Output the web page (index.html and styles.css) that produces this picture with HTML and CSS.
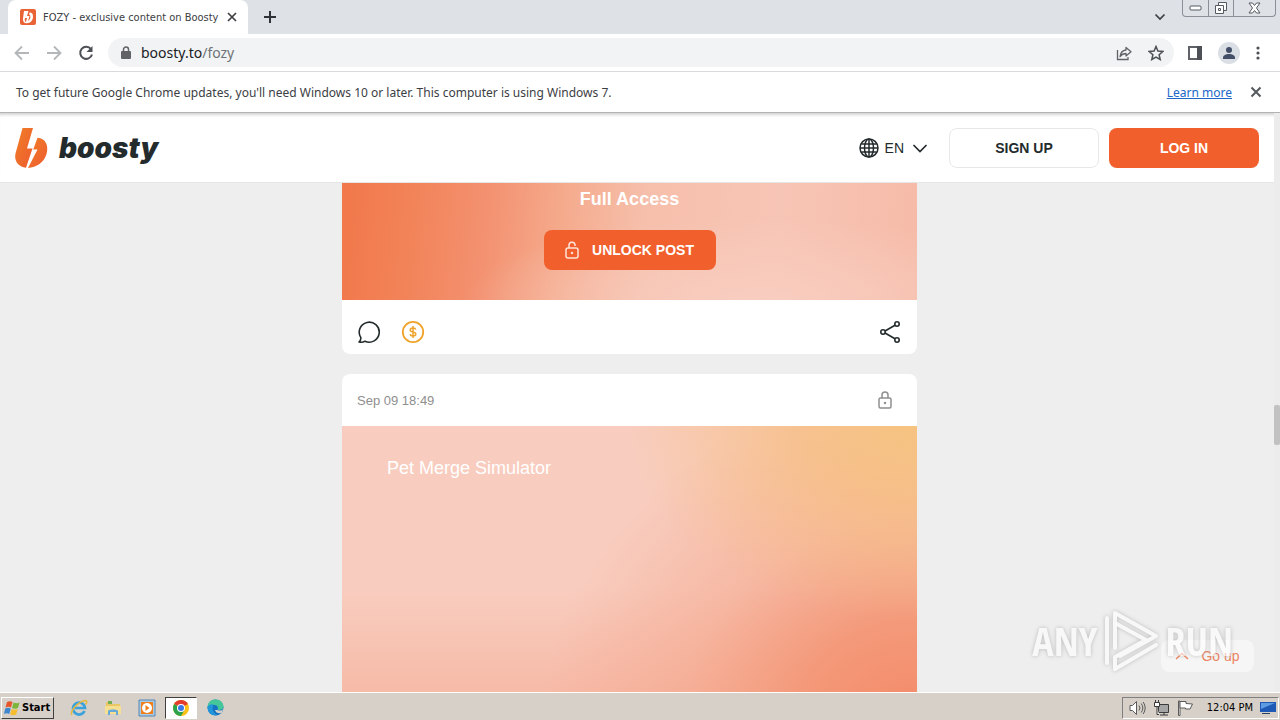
FILE: index.html
```
<!DOCTYPE html>
<html lang="en">

<head>
    <meta charset="UTF-8">
    <meta name="viewport" content="width=device-width, initial-scale=1.0">
    <title>FOZY - exclusive content on Boosty</title>
    <link rel="stylesheet" href="styles.css">
</head>

<body>
    <!-- tabs -->
    <div class="tabs">
        <div class="tab">
            <svg class="favicon" width="16" height="16" viewBox="0 0 16 16">
                <rect width="16" height="16" rx="2" fill="#ea6336" />
                <path d="M4 2 3 9.500C2.500 13 5 15 8 14c4-.5 6-5 4.500-9-.5-1-1.500-1.500-2.800-1.500L9 5.500c2 0 2 5-1 6.500l1.500-5H7l1.500-5H7L5 9l2 0-1 4c-2-1-1-4-.5-6L7 2z" fill="#fff" />
            </svg>
            <span class="tab-title">FOZY - exclusive content on Boosty</span>
            <button class="icon-btn" aria-label="Close tab">
                <svg width="10" height="10" viewBox="0 0 10 10"><path d="M1 1l8 8M9 1L1 9" stroke="#3c4043" stroke-width="1.700" /></svg>
            </button>
        </div>
        <button class="icon-btn new-tab" aria-label="New tab">
            <svg width="14" height="14" viewBox="0 0 14 14"><path d="M7 1v12M1 7h12" stroke="#2f3237" stroke-width="2" /></svg>
        </button>
        <button class="icon-btn tab-search" aria-label="Search tabs">
            <svg width="12" height="8" viewBox="0 0 12 8"><path d="M1.500 1.500 6 6l4.500-4.500" fill="none" stroke="#3c4043" stroke-width="1.700" /></svg>
        </button>
        <div class="window-btns">
            <button aria-label="Minimize"><svg width="13" height="6" viewBox="0 0 13 6"><rect x="1" y="1" width="11" height="4" rx="1" fill="#fff" stroke="#555a63" /></svg></button>
            <button aria-label="Restore"><svg width="14" height="14" viewBox="0 0 14 14"><path d="M4.500 1.500h8v8h-8z" fill="#fff" stroke="#555a63" /><path d="M1.500 4.500h8v8h-8z" fill="#fff" stroke="#555a63" /><path d="M4.500 7.500h2v2h-2z" fill="none" stroke="#555a63" /></svg></button>
            <button class="wide" aria-label="Close"><svg width="13" height="12" viewBox="0 0 13 12"><path d="M1 1h3.500l2 2.500L8.500 1H12L8.500 6l3.500 5H8.500l-2-2.500-2 2.500H1l3.500-5z" fill="#fff" stroke="#555a63" /></svg></button>
        </div>
    </div>

    <!-- address bar -->
    <div class="toolbar">
        <button class="icon-btn" aria-label="Back"><svg width="16" height="16" viewBox="0 0 16 16"><path d="M15 8H2M8 1.500 1.500 8 8 14.500" fill="none" stroke="#b4b7ba" stroke-width="1.800" /></svg></button>
        <button class="icon-btn" aria-label="Forward"><svg width="16" height="16" viewBox="0 0 16 16"><path d="M1 8h13M8 1.500 14.500 8 8 14.500" fill="none" stroke="#b4b7ba" stroke-width="1.800" /></svg></button>
        <button class="icon-btn" aria-label="Reload"><svg width="16" height="16" viewBox="0 0 16 16"><path d="M13 4.200A6 6 0 1 0 14 9.500" fill="none" stroke="#4d5156" stroke-width="2" /><path d="M14.500 1v6h-6z" fill="#4d5156" /></svg></button>
        <div class="omnibox">
            <svg width="10" height="13" viewBox="0 0 10 13"><rect y="5" width="10" height="8" rx="1" fill="#5f6368" /><path d="M2.500 5V3.500a2.500 2.500 0 0 1 5 0V5" fill="none" stroke="#5f6368" stroke-width="1.500" /></svg>
            <span class="url">boosty.to<span class="path">/fozy</span></span>
            <button class="icon-btn" aria-label="Share this page"><svg width="16" height="16" viewBox="0 0 16 16"><path d="M1.500 5v9.500H12V12" fill="none" stroke="#5f6368" stroke-width="1.300" /><path d="M10 2.500v2.500C6 5.500 4.500 8 4 11.500 5.500 9.500 7.500 8.500 10 8.500V11l5-4.300z" fill="none" stroke="#5f6368" stroke-width="1.300" stroke-linejoin="round" /></svg></button>
            <button class="icon-btn" aria-label="Bookmark"><svg width="16" height="16" viewBox="0 0 16 16"><path d="M8 1.500l1.900 4.600 4.900.4-3.700 3.200 1.100 4.800L8 12l-4.200 2.500 1.100-4.800L1.200 6.500l4.900-.4z" fill="none" stroke="#4d5156" stroke-width="1.500" /></svg></button>
        </div>
        <button class="icon-btn" aria-label="Side panel"><svg width="14" height="14" viewBox="0 0 14 14"><path d="M1 1h12v12H1z" fill="none" stroke="#5f6368" stroke-width="2" /><path d="M9 0h5v14H9z" fill="#4d5156" /></svg></button>
        <button class="icon-btn" aria-label="Profile"><svg width="22" height="22" viewBox="0 0 22 22"><circle cx="11" cy="11" r="11" fill="#dadee5" /><circle cx="11" cy="8" r="3" fill="#434e68" /><path d="M5 16c0-3 3-4 6-4s6 1 6 4v1H5z" fill="#434e68" /></svg></button>
        <button class="icon-btn" aria-label="Menu"><svg width="4" height="14" viewBox="0 0 4 14" fill="#4d5156"><circle cx="2" cy="2" r="1.600" /><circle cx="2" cy="7" r="1.600" /><circle cx="2" cy="12" r="1.600" /></svg></button>
    </div>

    <div class="infobar">
        <p>To get future Google Chrome updates, you'll need Windows 10 or later. This computer is using Windows 7.</p>
        <a href="#">Learn more</a>
        <button class="icon-btn" aria-label="Dismiss"><svg width="12" height="12" viewBox="0 0 12 12"><path d="M1.500 1.500l9 9M10.500 1.500l-9 9" stroke="#55585c" stroke-width="2" /></svg></button>
    </div>

    <!-- site -->
    <div class="page">
        <header class="header">
            <a class="logo" href="#" aria-label="boosty">
                <svg width="34" height="40" viewBox="0 0 34 40">
                    <defs>
                        <linearGradient id="logo-fill" x1="0" y1="0" x2="1" y2="1">
                            <stop offset="0" stop-color="#f08026" />
                            <stop offset="1" stop-color="#ee5a30" />
                        </linearGradient>
                    </defs>
                    <path d="M7.500 0H18L12 20.500h5.500L11 39.800C3 38.500-1 33 .5 25.500z" fill="url(#logo-fill)" />
                    <path d="M22.500 9.800C30.500 10 34 18 31.500 26 29 34.500 21.500 39.500 13 40L22.500 21.500h-4.300z" fill="url(#logo-fill)" />
                </svg>
                <span class="wordmark">boosty</span>
            </a>
            <button class="lang">
                <svg width="20" height="20" viewBox="0 0 20 20" fill="none" stroke="#242b2c" stroke-width="1.500"><circle cx="10" cy="10" r="9" /><ellipse cx="10" cy="10" rx="4.500" ry="9" /><path d="M10 1v18M1 10h18M2.500 6h15M2.500 14h15" /></svg>
                <span>EN</span>
                <svg class="chevron" width="14" height="9" viewBox="0 0 14 9"><path d="M1 1.500l6 6 6-6" fill="none" stroke="#242b2c" stroke-width="1.700" stroke-linecap="round" /></svg>
            </button>
            <button class="btn btn-light">SIGN UP</button>
            <button class="btn btn-orange">LOG IN</button>
        </header>

        <main class="feed">
            <article class="post post-first">
                <div class="teaser teaser-level">
                    <h3>Full Access</h3>
                    <button class="btn btn-orange btn-unlock">
                        <svg width="14" height="18" viewBox="0 0 14 18" fill="none" stroke="#ffe3d8" stroke-width="1.500"><rect x="1" y="7" width="12" height="10" rx="2" /><path d="M4 7V4.500a3 3 0 0 1 6-.5v1" /><circle cx="7" cy="12" r=".5" /></svg>
                        UNLOCK POST
                    </button>
                </div>
                <div class="post-actions">
                    <button class="icon-btn" aria-label="Comments"><svg width="24" height="24" viewBox="0 0 24 24"><path d="M3.800 17.500A10 10 0 1 1 8 21.200C6.500 22.200 4 22.500 2 22c1.500-1.300 2-3 1.800-4.500z" fill="none" stroke="#242b2c" stroke-width="1.600" stroke-linejoin="round" /></svg></button>
                    <button class="icon-btn" aria-label="Donate"><svg width="24" height="24" viewBox="0 0 24 24" fill="none" stroke="#f0a32a"><circle cx="12" cy="12" r="10.200" stroke-width="1.800" /><path d="M14.800 9.600C14.500 8.500 13.500 8 12 8c-1.600 0-2.800.7-2.800 2s1.200 1.700 2.800 2 2.800.7 2.800 2-1.200 2-2.800 2-2.700-.6-3-1.700M12 6v12" stroke-width="1.500" /></svg></button>
                    <button class="icon-btn share" aria-label="Share"><svg width="22" height="24" viewBox="0 0 22 24" fill="none" stroke="#242b2c" stroke-width="1.600"><circle cx="4" cy="12" r="2.200" /><circle cx="18" cy="4" r="2.200" /><circle cx="18" cy="20" r="2.200" /><path d="M6 11l10-5.800M6 13l10 5.800" /></svg></button>
                </div>
            </article>

            <article class="post">
                <div class="post-head">
                    <a href="#">Sep 09 18:49</a>
                    <svg width="14" height="18" viewBox="0 0 14 18" fill="none" stroke="#8f8f8f" stroke-width="1.500"><rect x="1" y="7" width="12" height="10" rx="1.500" /><path d="M4 7V4a3 3 0 0 1 6 0v3" /><circle cx="7" cy="12" r=".5" /></svg>
                </div>
                <div class="teaser teaser-title">
                    <h2>Pet Merge Simulator</h2>
                </div>
            </article>
        </main>

        <div class="scrollbar"><div class="thumb"></div></div>

        <button class="go-up">
            <svg width="14" height="8" viewBox="0 0 14 8"><path d="M1 7l6-5.500L13 7" fill="none" stroke="#ec8460" stroke-width="1.500" /></svg>
            Go up
        </button>

        <div class="watermark">
            <span>ANY</span>
            <svg width="56" height="62" viewBox="0 0 56 62" fill="none" stroke="#fff" stroke-width="4" stroke-linejoin="round" stroke-linecap="round">
                <path d="M12 38V3l41 23-36 20" />
                <path d="M12 13l31 17" />
                <path d="M4 8v45M12 59l41-24" />
                <path d="M12 59V47l27-15" />
            </svg>
            <span>RUN</span>
        </div>
    </div>

    <!-- taskbar -->
    <div class="taskbar">
        <button class="start">
            <svg width="17" height="16" viewBox="0 0 17 16"><path d="M3 2c2-1 4-1 5.500 0L7 7.500C5.500 6.500 3.500 6.500 1.500 7.500z" fill="#e5572b" /><path d="M9.500 2.500c2 1 4 1 6 0L14 8c-2 1-4 1-6 0z" fill="#7db53a" /><path d="M1.200 8.500c2-1 4-1 5.500 0L5.300 14c-1.500-1-3.500-1-5.300 0z" fill="#3d87cf" /><path d="M7.700 9c2 1 4 1 6 0l-1.500 5.500c-2 1-4 1-6 0z" fill="#f5bd2f" /></svg>
            Start
        </button>
        <div class="quick">
            <button aria-label="Internet Explorer"><svg width="18" height="18" viewBox="0 0 18 18" fill="none"><path d="M14.500 12A6 6 0 1 1 15 9H5" stroke="#3ba2dc" stroke-width="2.700" /><path d="M2 16C-1 14 7 3 15 1.500c3 0 1.500 3 .5 4" stroke="#e8b93d" stroke-width="1.500" /></svg></button>
            <button aria-label="Explorer"><svg width="18" height="16" viewBox="0 0 18 16"><path d="M2 2h5l1 2h8v9H2z" fill="#e9c765" /><path d="M4 1h4v3H4z" fill="#71ad53" /><path d="M1 6h16v8H1z" fill="#f6df91" /><path d="M4 15v-4c0-2 10-2 10 0v4h-2v-3H6v3z" fill="#64a9d8" /></svg></button>
            <button aria-label="Media Player"><svg width="18" height="18" viewBox="0 0 18 18"><path d="M1 1h16v16H1z" fill="#a9cbe8" stroke="#5786b2" /><path d="M3 3h12v12H3z" fill="#ef7f1a" /><circle cx="9" cy="9" r="5" fill="#fff" /><path d="M7.500 6l4 3-4 3z" fill="#ef7f1a" /></svg></button>
            <button class="active" aria-label="Chrome"><svg width="16" height="16" viewBox="0 0 16 16"><circle cx="8" cy="8" r="8" fill="#fbc116" /><path d="M8 8 1.100 4A8 8 0 0 1 14.900 4z" fill="#e33b2e" /><path d="M8 8 1.100 4A8 8 0 0 0 8 16l3.500-6z" fill="#2da24c" /><circle cx="8" cy="8" r="4" fill="#fff" /><circle cx="8" cy="8" r="3" fill="#3b78e7" /></svg></button>
            <button aria-label="Edge"><svg width="17" height="17" viewBox="0 0 17 17"><circle cx="8.500" cy="8.500" r="8" fill="#1673c4" /><path d="M.5 8C1 3 4 .5 8.500.5c5 0 8 3.500 8 7 0 3-3 4-6 3.300 1.500-2.500-.5-4.800-3-4.800C4 6 1.500 7 .5 8z" fill="#45c79a" /><path d="M.5 8C1.500 6 4 4.800 7 5.500 5 7 4.500 13 10 16 4 17.500.5 13 .5 8z" fill="#2196d8" /><path d="M10.300 11c2 1 4.700.5 6-.8L14.500 14c-3 1-6-.5-6.500-3z" fill="#d6d2c8" /></svg></button>
        </div>
        <div class="tray">
            <svg width="17" height="16" viewBox="0 0 17 16" stroke="#5a5a5a"><path d="M1 5.500h2.500l4-4v13l-4-4H1z" fill="#fff" /><path d="M10 5.500q2 2.500 0 5M12.200 3.500q3.300 4.500 0 9M14.200 2q4 6 0 12" fill="none" /></svg>
            <svg width="17" height="16" viewBox="0 0 17 16" stroke="#3b3b3b"><path d="M5.500 4.500h10v8h-10z" fill="#a5a5a5" /><path d="M7 15h8M11 12.500V15" /><path d="M1.500 2.500h5v4h-5zM2.500 0v3M5.500 0v3M4 6.500v8h2" fill="#fff" /></svg>
            <svg width="17" height="16" viewBox="0 0 17 16" stroke="#5a5a5a"><path d="M1.500 1v14.500h1.500V1z" fill="#fff" /><path d="M3 1.500h6v2l6.500.5-2.500 5H8.500V8H3z" fill="#fff" /></svg>
            <time>12:04 PM</time>
            <svg width="16" height="14" viewBox="0 0 16 14"><path d="M0 1h16v10H0z" fill="#1d59b5" /><path d="M1 2h14L1 8z" fill="#5e9be2" /><path d="M2 12h8v1H2z" fill="#263f6b" /></svg>
        </div>
    </div>
</body>

</html>
```
FILE: styles.css
```
* {
    margin: 0;
    padding: 0;
    box-sizing: border-box;
}

body {
    display: flex;
    flex-direction: column;
    height: 100vh;
    overflow: hidden;
    font-family: "Liberation Sans", Arial, sans-serif;
    color: #242b2c;
}

button {
    font: inherit;
    color: inherit;
    border: none;
    background: none;
}

svg {
    display: block;
    flex: none;
}

.icon-btn {
    display: flex;
    align-items: center;
    justify-content: center;
}

.tabs,
.toolbar,
.infobar,
.taskbar {
    display: flex;
    align-items: center;
    flex: none;
    font-family: "DejaVu Sans Condensed", Tahoma, sans-serif;
}

/* tabs */
.tabs {
    height: 34px;
    padding: 0 4px 0 8px;
    background-color: #dee1e6;
}

.tab {
    display: flex;
    align-items: center;
    gap: 7px;
    width: 240px;
    height: 34px;
    padding: 0 11px 0 12px;
    background-color: #fff;
    border-radius: 8px 8px 0 0;
}

.tab-title {
    flex: 1;
    font-size: 11px;
    white-space: nowrap;
    color: #3c4043;
}

.new-tab {
    margin-left: 15px;
}

.tab-search {
    margin-left: auto;
    margin-right: 16px;
}

.window-btns {
    display: flex;
    align-self: flex-start;
    border: 1px solid #8b8f98;
    border-top: none;
    border-radius: 0 0 4px 4px;
}

.window-btns button {
    display: flex;
    align-items: center;
    justify-content: center;
    width: 25px;
    height: 16px;
}

.window-btns button + button {
    border-left: 1px solid #8b8f98;
}

.window-btns .wide {
    width: 42px;
}

/* toolbar */
.toolbar {
    gap: 16px;
    height: 38px;
    padding: 0 20px 0 14px;
    background-color: #fff;
    border-bottom: 1px solid #d8dadd;
}

.omnibox {
    display: flex;
    align-items: center;
    flex: 1;
    gap: 16px;
    height: 29px;
    margin: 0 -2px;
    padding: 0 10px 0 13px;
    background-color: #f1f3f4;
    border-radius: 15px;
}

.url {
    flex: 1;
    margin-left: -6px;
    font-family: "Noto Sans", sans-serif;
    font-size: 14px;
    color: #202124;
}

.url .path {
    color: #6f7377;
}

/* infobar */
.infobar {
    gap: 18px;
    height: 41px;
    padding: 0 18px 0 16px;
    background-color: #fff;
    border-bottom: 1px solid #b3b3b3;
    font-family: "Noto Sans", sans-serif;
    font-size: 12px;
    color: #3c4043;
}

.infobar p {
    flex: 1;
}

.infobar a {
    color: #2068c8;
}

/* site */
.page {
    position: relative;
    flex: 1;
    min-height: 0;
    overflow: hidden;
    background-color: #eee;
}

.header {
    display: flex;
    align-items: center;
    gap: 10px;
    height: 70px;
    margin-right: 6px;
    padding: 1px 15px 0;
    background-color: #fff;
    border-bottom: 1px solid #e6e6e6;
    box-shadow: inset 0 4px 3px -2px #d4d4d4;
}

.logo {
    display: flex;
    align-items: center;
    gap: 10px;
    margin-right: auto;
    color: #242b2c;
    text-decoration: none;
}

.wordmark {
    font-family: Inter, sans-serif;
    font-size: 28px;
    line-height: 40px;
    font-weight: 900;
    font-style: italic;
}

.lang {
    display: flex;
    align-items: center;
    gap: 6px;
    margin-right: 12px;
    font-size: 14px;
}

.lang .chevron {
    margin-left: 3px;
}

.btn {
    width: 150px;
    height: 40px;
    border-radius: 8px;
    font-size: 14px;
    font-weight: bold;
}

.btn-light {
    border: 1px solid #e8e8e8;
}

.btn-orange {
    background-color: #f15f2c;
    color: #fff;
}

.feed {
    display: flex;
    flex-direction: column;
    align-items: center;
    gap: 20px;
    padding-right: 21px;
}

.post {
    width: 45%;
    min-width: 575px;
    background-color: #fff;
    border-radius: 8px;
}

.post-first {
    border-radius: 0 0 8px 8px;
}

.teaser {
    color: #fff;
}

.teaser h2,
.teaser h3 {
    font-size: 18px;
    line-height: 22px;
}

.teaser h2 {
    font-weight: normal;
}

.teaser-level {
    display: flex;
    flex-direction: column;
    align-items: center;
    gap: 20px;
    padding: 5px 0 30px;
    background: radial-gradient(ellipse at 72% 100%, #f8cdbf 0%, rgba(247, 195, 177, 0) 50%), linear-gradient(95deg, #f1784a 0%, #f28358 12%, #f39170 25%, #f5aa8c 38%, #f6bfab 52%, #f7c5b5 75%, #f6bba8 100%);
}

.btn-unlock {
    display: flex;
    align-items: center;
    justify-content: center;
    gap: 13px;
    width: 172px;
}

.post-actions {
    display: flex;
    align-items: center;
    gap: 20px;
    height: 54px;
    padding: 10px 16px 0 15px;
}

.post-actions .share {
    margin-left: auto;
}

.post-head {
    display: flex;
    align-items: center;
    justify-content: space-between;
    height: 52px;
    padding: 0 25px 0 15px;
}

.post-head a {
    font-size: 13px;
    color: #8f8f8f;
    text-decoration: none;
}

.teaser-title {
    height: 324px;
    padding: 31px 45px;
    background: radial-gradient(ellipse 50% 60% at 100% 0%, #f6c380 0%, rgba(246, 190, 125, 0.700) 40%, rgba(246, 190, 140, 0) 100%), radial-gradient(ellipse 65% 100% at 100% 90%, #f38b69 0%, rgba(243, 146, 112, 0.850) 30%, rgba(244, 160, 130, 0.450) 62%, rgba(247, 200, 185, 0) 100%), linear-gradient(#f8cdbf 50%, #f6b6a2 90%);
}

.scrollbar {
    position: absolute;
    top: 0;
    right: 0;
    bottom: 0;
    width: 6px;
    padding-top: 292px;
    background-color: #ececec;
}

.thumb {
    height: 40px;
    background-color: #c1c1c1;
    border-radius: 2px;
}

.go-up {
    position: absolute;
    right: 26px;
    bottom: 20px;
    display: flex;
    align-items: center;
    justify-content: center;
    gap: 12px;
    width: 93px;
    height: 32px;
    background-color: #f6f6f6;
    border-radius: 8px;
    font-size: 14px;
    color: #ec8460;
}

.watermark {
    position: absolute;
    right: 47px;
    bottom: 20px;
    display: flex;
    align-items: center;
    gap: 6px;
    font-family: "Liberation Sans Narrow", "Open Sans Condensed", Roboto, sans-serif;
    font-size: 40px;
    line-height: 62px;
    font-weight: 300;
    color: #fff;
    opacity: 0.600;
    filter: drop-shadow(0 0 2px #999);
    pointer-events: none;
}

/* taskbar */
.taskbar {
    height: 28px;
    padding: 2px 1px 0;
    background-color: #d6d0c8;
    border-top: 1px solid #fff;
    font-size: 11px;
    color: #000;
}

.start {
    display: flex;
    align-items: center;
    gap: 1px;
    width: 53px;
    height: 22px;
    padding-left: 2px;
    border: 1px solid;
    border-color: #fff #404040 #404040 #fff;
    font-weight: bold;
}

.quick {
    display: flex;
    gap: 2px;
    margin-left: 9px;
}

.quick button {
    display: flex;
    align-items: center;
    justify-content: center;
    width: 32px;
    height: 22px;
}

.quick .active {
    background-color: #fff;
    border: 1px solid;
    border-color: #404040 #fff #fff #404040;
}

.tray {
    display: flex;
    align-items: center;
    gap: 7px;
    height: 22px;
    margin-left: auto;
    padding: 0 2px 0 6px;
    border: 1px solid;
    border-color: #808080 #fff #fff #808080;
}

.tray time {
    margin-left: 6px;
}
```
